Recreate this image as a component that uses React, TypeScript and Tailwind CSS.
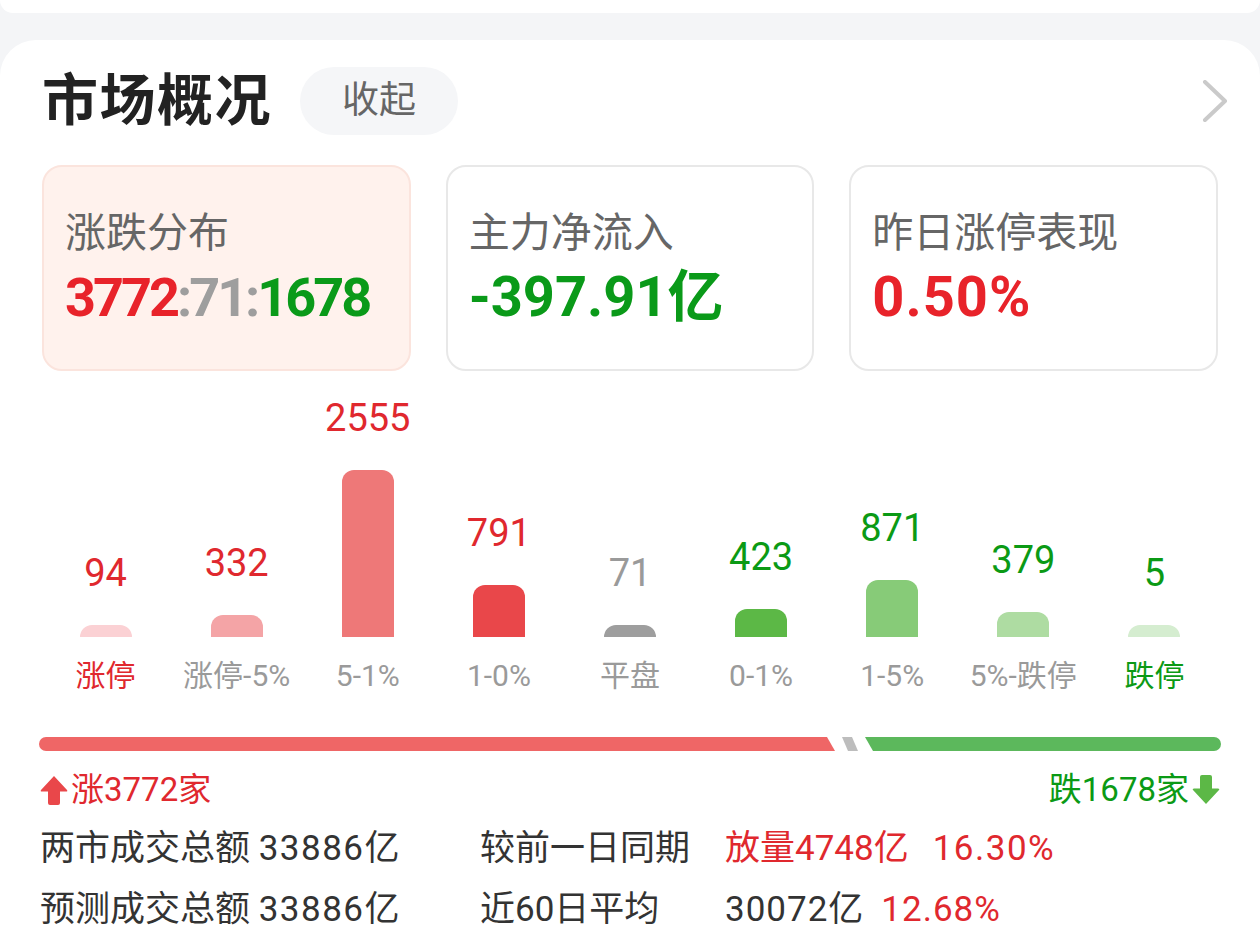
import React from "react";

type Bucket = {
  label: string;
  count: number;
  bar: string;
  tone: "up" | "flat" | "down";
  labelTone?: "up" | "down";
};

const buckets: Bucket[] = [
  { label: "涨停", count: 94, bar: "bg-[#fbd1d4]", tone: "up", labelTone: "up" },
  { label: "涨停-5%", count: 332, bar: "bg-[#f4a4a6]", tone: "up" },
  { label: "5-1%", count: 2555, bar: "bg-[#ee7878]", tone: "up" },
  { label: "1-0%", count: 791, bar: "bg-[#e9474a]", tone: "up" },
  { label: "平盘", count: 71, bar: "bg-[#9e9e9e]", tone: "flat" },
  { label: "0-1%", count: 423, bar: "bg-[#5cb846]", tone: "down" },
  { label: "1-5%", count: 871, bar: "bg-[#87cb78]", tone: "down" },
  { label: "5%-跌停", count: 379, bar: "bg-[#aedca2]", tone: "down" },
  { label: "跌停", count: 5, bar: "bg-[#d5edd0]", tone: "down", labelTone: "down" },
];

const toneText = {
  up: "text-[#e0282e]",
  flat: "text-[#9a9a9a]",
  down: "text-[#0b9a15]",
};

const MAX_BAR = 167;
const MIN_BAR = 12;

const ArrowUp: React.FC<{ className?: string }> = ({ className }) => (
  <svg viewBox="0 0 28 30" className={className} fill="currentColor">
    <path d="M14 1 L27 15 Q28 16.5 26 16.5 L20 16.5 L20 28 Q20 30 18 30 L10 30 Q8 30 8 28 L8 16.5 L2 16.5 Q0 16.5 1 15 Z" />
  </svg>
);

const ArrowDown: React.FC<{ className?: string }> = ({ className }) => (
  <svg viewBox="0 0 28 30" className={className} fill="currentColor">
    <path d="M14 29 L27 15 Q28 13.5 26 13.5 L20 13.5 L20 2 Q20 0 18 0 L10 0 Q8 0 8 2 L8 13.5 L2 13.5 Q0 13.5 1 15 Z" />
  </svg>
);

const StatCard: React.FC<{ title: string; highlight?: boolean; children: React.ReactNode }> = ({
  title,
  highlight,
  children,
}) => (
  <div
    className={
      highlight
        ? "h-[206px] rounded-[20px] border-2 border-[#fbe4dd] bg-[#fff2ed] px-[21px] pt-[42px]"
        : "h-[206px] rounded-[20px] border-2 border-[#e8e8e8] bg-white px-[21px] pt-[42px]"
    }
  >
    <div className="text-[41px] leading-[48px] text-[#666]">{title}</div>
    <div className="mt-[8px] h-[64px] text-[56px] font-bold leading-[64px]">{children}</div>
  </div>
);

export default function App() {
  return (
    <div
      className="min-h-[946px] bg-[#f4f5f7] text-[#333]"
      style={{ fontFamily: 'Roboto, "Noto Sans CJK SC", sans-serif' }}
    >
      {/* previous section's card edge */}
      <div className="h-[13px] rounded-b-[30px] bg-white" />

      <div className="mt-[27px] min-h-[906px] rounded-t-[36px] bg-white px-[40px] pt-[27px]">
        {/* Header */}
        <div className="flex h-[68px] items-center">
          <h1 className="ml-[2px] text-[56px] font-bold leading-none tracking-[1.5px] text-[#222]">市场概况</h1>
          <button className="ml-[28px] flex h-[68px] w-[158px] items-center justify-center rounded-full bg-[#f5f6f8] text-[37px] text-[#666]">
            收起
          </button>
          <svg viewBox="0 0 26 42" className="ml-auto mr-[-8px] h-[42px] w-[26px]" fill="none">
            <polyline
              points="3,2 23,21 3,40"
              stroke="#cacaca"
              strokeWidth="4"
              strokeLinecap="round"
              strokeLinejoin="round"
            />
          </svg>
        </div>

        {/* Summary cards */}
        <div className="mt-[30px] grid grid-cols-3 gap-[35px] px-[2px]">
          <StatCard title="涨跌分布" highlight>
            <span className="text-[54px] tracking-[-3px]">
              <span className="text-[#e8232a]">3772</span>
              <span className="text-[#9e9e9e]">:71:</span>
              <span className="text-[#0a9a19]">1678</span>
            </span>
          </StatCard>
          <StatCard title="主力净流入">
            <span className="text-[#0a9a19]">-397.91亿</span>
          </StatCard>
          <StatCard title="昨日涨停表现">
            <span className="tracking-[1px] text-[#e8232a]">0.50%</span>
          </StatCard>
        </div>

        {/* Distribution chart */}
        <div className="grid grid-cols-9">
          {buckets.map((b) => {
            const h = Math.max(MIN_BAR, Math.round((b.count / 2555) * MAX_BAR));
            return (
              <div key={b.label} className="flex flex-col items-center">
                <div className="flex h-[266px] flex-col items-center justify-end">
                  <div className={`mb-[30px] text-[38px] leading-[44px] ${toneText[b.tone]}`}>{b.count}</div>
                  <div className={`w-[52px] rounded-t-[12px] ${b.bar}`} style={{ height: h }} />
                </div>
                <div
                  className={`mt-[21px] text-[30px] leading-[36px] ${
                    b.labelTone ? toneText[b.labelTone] : "text-[#9a9a9a]"
                  }`}
                >
                  {b.label}
                </div>
              </div>
            );
          })}
        </div>

        {/* Up / flat / down ratio bar */}
        <div className="mx-[-1px] mt-[43px] flex h-[14px]">
          <div className="w-[796px] rounded-l-full bg-[#ef6666] [clip-path:polygon(0_0,calc(100%-8px)_0,100%_100%,0_100%)]" />
          <div className="ml-[7px] w-[16px] bg-[#bdbdbd] [clip-path:polygon(0_0,10px_0,100%_100%,6px_100%)]" />
          <div className="ml-[7px] flex-1 rounded-r-full bg-[#5cb85c] [clip-path:polygon(0_0,100%_0,100%_100%,8px_100%)]" />
        </div>

        <div className="mt-[19px] flex h-[40px] items-center justify-between text-[33px]">
          <div className="flex items-center text-[#e0282e]">
            <ArrowUp className="mr-[3px] h-[30px] w-[28px] text-[#e9474a]" />
            <span>涨3772家</span>
          </div>
          <div className="flex items-center text-[#0b9a15]">
            <span>跌1678家</span>
            <ArrowDown className="ml-[3px] h-[30px] w-[28px] text-[#5cb846]" />
          </div>
        </div>

        {/* Turnover */}
        <div className="mt-[8px] grid grid-cols-[440px_245px_1fr] text-[35px] leading-[61px] text-[#333]">
          <div>
            两市成交总额 <span className="tracking-[1.5px]">33886亿</span>
          </div>
          <div>较前一日同期</div>
          <div className="text-[#e0282e]">
            放量4748亿<span className="ml-[24px] tracking-[1.5px]">16.30%</span>
          </div>
          <div>
            预测成交总额 <span className="tracking-[1.5px]">33886亿</span>
          </div>
          <div>近60日平均</div>
          <div>
            <span className="tracking-[1px]">30072亿</span>
            <span className="ml-[17px] tracking-[1px] text-[#e0282e]">12.68%</span>
          </div>
        </div>
      </div>
    </div>
  );
}
